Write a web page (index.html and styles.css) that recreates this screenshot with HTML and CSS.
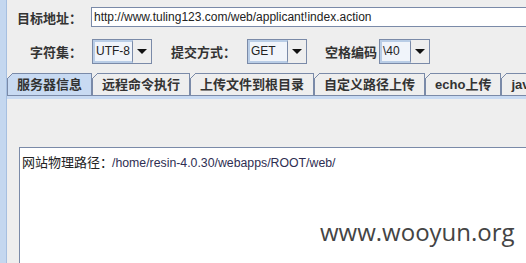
FILE: index.html
```html
<!DOCTYPE html>
<html lang="zh-CN">
<head>
    <meta charset="UTF-8">
    <title>Webshell Tool</title>
    <link rel="stylesheet" href="styles.css">
</head>
<body>
    <div class="app">
        <div class="side"></div>
        <div class="main">
            <div class="row url-row">
                <span class="label label-url">目标地址：</span>
                <div class="url-input">http://www.tuling123.com/web/applicant!index.action</div>
            </div>

            <div class="row opts-row">
                <span class="label label-charset">字符集：</span>
                <div class="combo">
                    <span class="field f-charset">UTF-8</span>
                    <span class="arrow"></span>
                </div>

                <span class="label label-method">提交方式：</span>
                <div class="combo">
                    <span class="field f-method">GET</span>
                    <span class="arrow"></span>
                </div>

                <span class="label label-space">空格编码</span>
                <div class="combo">
                    <span class="field f-space">\40</span>
                    <span class="arrow"></span>
                </div>
            </div>

            <div class="tabs">
                <div class="tab active">服务器信息</div>
                <div class="tab">远程命令执行</div>
                <div class="tab">上传文件到根目录</div>
                <div class="tab">自定义路径上传</div>
                <div class="tab">echo上传</div>
                <div class="tab">java</div>
            </div>
            <div class="tab-line"></div>

            <div class="panel">
                <div class="output">
                    <p class="line">网站物理路径：<span class="path">/home/resin-4.0.30/webapps/ROOT/web/</span></p>
                    <div class="watermark">www.wooyun.org</div>
                </div>
            </div>
        </div>
    </div>
</body>
</html>
```

FILE: styles.css
```css
* { margin: 0; padding: 0; box-sizing: border-box; }

html, body {
    height: 100%;
    overflow: hidden;
}

body {
    background: #eeeeee;
    font-family: "Liberation Sans", "Noto Sans CJK SC", sans-serif;
    color: #333333;
}

.app {
    display: flex;
    height: 100vh;
}

.side {
    width: 7px;
    flex-shrink: 0;
    background: #c4d7ef;
    border-right: 1px solid #a6bfe0;
}

.main {
    flex: 1;
    display: flex;
    flex-direction: column;
    min-width: 0;
    padding-top: 7px;
}

.row {
    display: flex;
    align-items: center;
}

.label {
    font-family: "Noto Sans CJK SC", sans-serif;
    font-weight: 700;
    font-size: 13px;
    color: #333333;
    white-space: nowrap;
}

/* first row */
.url-row {
    height: 20px;
    padding-left: 10px;
}

.label-url { width: 74px; }

.url-input {
    flex: 1;
    height: 20px;
    background: white;
    border: 1px solid #7a8aa8;
    border-right: none;
    font-size: 12px;
    line-height: 18px;
    padding-left: 2px;
    color: #222;
    white-space: nowrap;
    overflow: hidden;
}

/* second row */
.opts-row {
    margin-top: 12px;
    height: 25px;
    padding-left: 23px;
}

.label-charset { width: 62px; }
.label-method { width: 76px; margin-left: 19px; }
.label-space { width: 54px; margin-left: 18px; }

.combo {
    display: flex;
    height: 25px;
    border: 1px solid #7a8aa8;
}

.field {
    background: #f0f4fa;
    border: 2px solid #b9cde6;
    border-right: 1px solid #7a8aa8;
    font-size: 12px;
    line-height: 19px;
    padding-left: 1px;
    color: #222;
}

.f-charset { width: 40px; }
.f-method { width: 40px; }
.f-space { width: 31px; }

.arrow {
    width: 18px;
    background: #eeeeee;
    display: flex;
    align-items: center;
    justify-content: center;
}

.arrow::after {
    content: "";
    border-left: 5px solid transparent;
    border-right: 5px solid transparent;
    border-top: 5px solid #111;
}

/* tabs */
.tabs {
    display: flex;
    margin-top: 9px;
    height: 22px;
    white-space: nowrap;
    overflow: hidden;
}

.tab {
    position: relative;
    flex-shrink: 0;
    height: 22px;
    padding: 0 9px 0 10px;
    border: 1px solid #7a8aa8;
    border-left: none;
    border-bottom: none;
    background: #eeeeee;
    font-family: "Liberation Sans", "Noto Sans CJK SC", sans-serif;
    font-weight: 700;
    font-size: 13px;
    line-height: 22px;
    color: #333333;
}

/* slanted top-left corner of each tab */
.tab::before {
    content: "";
    position: absolute;
    left: 0;
    top: -1px;
    width: 6px;
    height: 6px;
    background: linear-gradient(135deg, #eeeeee 0, #eeeeee 3.6px, #7a8aa8 3.6px, #7a8aa8 4.8px, transparent 4.8px);
}

.tab::after {
    content: "";
    position: absolute;
    left: 0;
    top: 5px;
    bottom: 0;
    width: 1px;
    background: #7a8aa8;
}

.tab.active {
    background: #c8daf2;
}

.tab-line {
    height: 4px;
    border-top: 1px solid #7a8aa8;
    background: #c8daf2;
}

/* panel */
.panel {
    flex: 1;
    display: flex;
    flex-direction: column;
    padding-top: 48px;
    padding-left: 12px;
}

.output {
    position: relative;
    flex: 1;
    background: white;
    border-top: 1px solid #7a8aa8;
    border-left: 1px solid #7a8aa8;
    padding: 6px 0 0 2px;
}

.line {
    font-family: "Noto Sans CJK SC", sans-serif;
    font-size: 13px;
    line-height: 16px;
    color: #222;
    white-space: nowrap;
}

.path {
    font-family: "Liberation Sans", sans-serif;
    font-size: 12.3px;
    color: #2e2e52;
    margin-left: -1px;
}

.watermark {
    position: absolute;
    left: 300px;
    top: 67px;
    font-family: "Open Sans", "Noto Sans", sans-serif;
    font-size: 24px;
    color: #444444;
}
```
